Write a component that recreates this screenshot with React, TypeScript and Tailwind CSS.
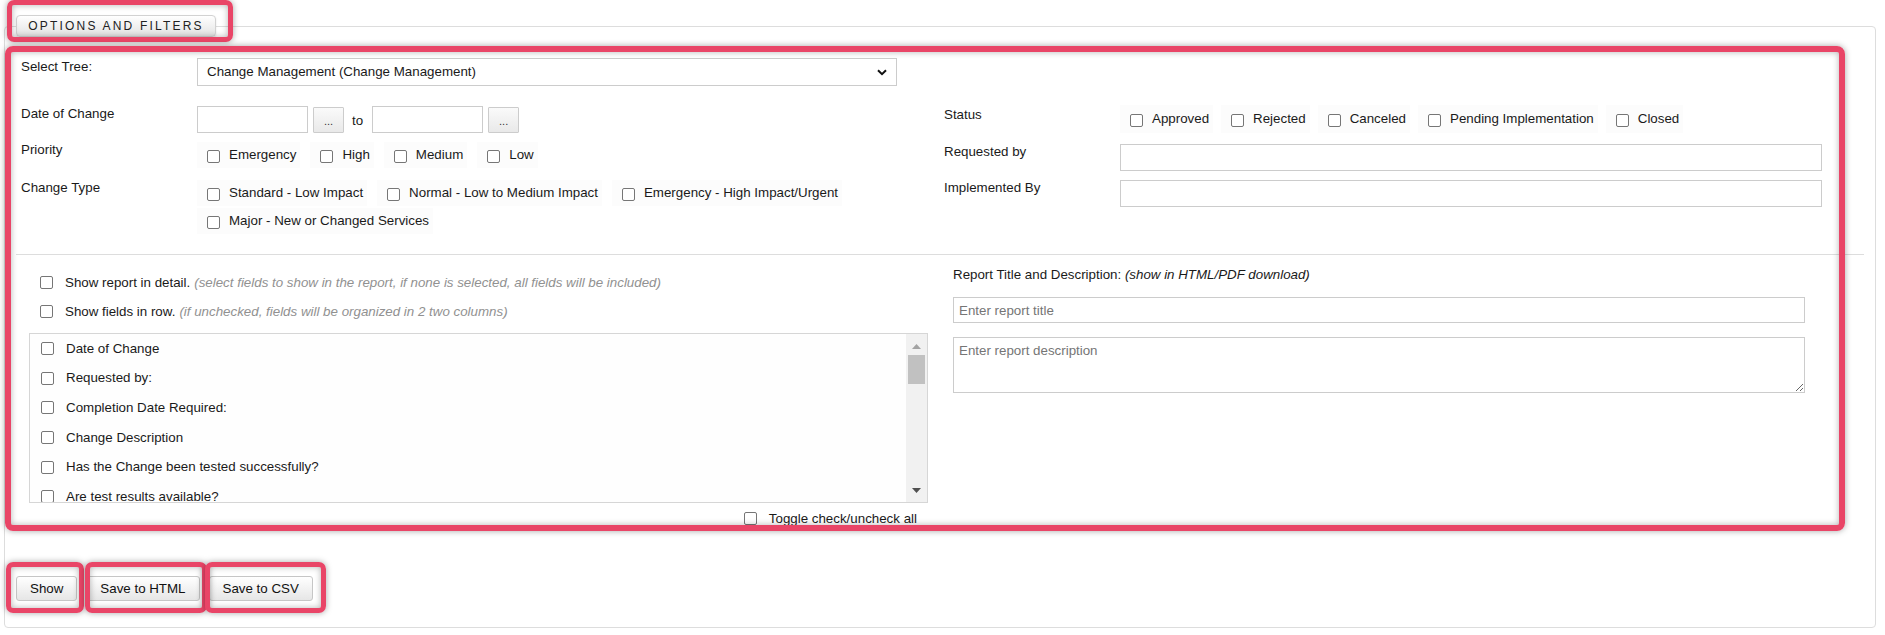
import React from "react";

const Box = ({ className = "" }: { className?: string }) => (
  <span
    className={`inline-block h-[13px] w-[13px] shrink-0 rounded-[2px] border border-[#767676] bg-white ${className}`}
  />
);

function Pill({ label, tall }: { label: string; tall?: boolean }) {
  return (
    <label className={`flex items-center bg-[#fcfcfc] pl-[10px] pr-[4px] ${tall ? "h-[28px]" : "h-[26px]"}`}>
      <Box className="mr-[9px] mt-[3px]" />
      <span className="whitespace-nowrap">{label}</span>
    </label>
  );
}

function Label({ children }: { children: React.ReactNode }) {
  return <div className="w-[176px] shrink-0 leading-[15px]">{children}</div>;
}

function DateInput() {
  return <div className="h-[27px] w-[111px] border border-[#ccc] bg-white" />;
}

function DotsButton() {
  return (
    <div className="ml-[5px] mt-[1px] flex h-[26px] w-[31px] items-end justify-center rounded-[1px] border border-[#ccc] bg-gradient-to-b from-[#fafafa] to-[#e9e9e9] pb-[5px] text-[11px] leading-none text-[#333]">
      ...
    </div>
  );
}

function Redbox({ className }: { className: string }) {
  return (
    <div
      className={`pointer-events-none absolute border-[#e94567] shadow-[0_0_6px_rgba(0,0,0,0.35),inset_0_0_6px_rgba(0,0,0,0.3)] ${className}`}
    />
  );
}

const fields = [
  "Date of Change",
  "Requested by:",
  "Completion Date Required:",
  "Change Description",
  "Has the Change been tested successfully?",
  "Are test results available?",
];

export default function App() {
  return (
    <div className="relative h-[635px] w-[1885px] overflow-hidden bg-white pl-[4px] pt-[26px] font-['Liberation_Sans',Arial,sans-serif] text-[13.33px] text-[#1a1a1a]">
      <div className="relative h-[602px] w-[1872px] rounded-[4px] border border-[#ddd]">
        {/* tab sitting on the top border */}
        <div className="absolute left-[11px] top-[-12px] flex h-[22px] w-[200px] items-center justify-center rounded-[4px] border border-[#d2d2d2] bg-gradient-to-b from-white to-[#e3e3e3] text-[12px] uppercase tracking-[2.2px] text-[#222] shadow-[0_1px_2px_rgba(0,0,0,0.12)]">
          Options and Filters
        </div>

        {/* filters */}
        <div className="pl-[16px] pt-[31px]">
          <div className="flex items-start">
            <Label>
              <div className="pt-[1px]">Select Tree:</div>
            </Label>
            <div className="flex h-[28px] w-[700px] items-center justify-between border border-[#ccc] bg-white pl-[9px] pr-[9px]">
              <span>Change Management (Change Management)</span>
              <svg width="10" height="7" viewBox="0 0 10 7" className="mt-[1px]">
                <path d="M1 1.2 L5 5.2 L9 1.2" fill="none" stroke="#111" strokeWidth="2" />
              </svg>
            </div>
          </div>

          <div className="mt-[20px] flex items-start">
            <div className="w-[923px] shrink-0">
              <div className="flex h-[27px] items-start">
                <Label>Date of Change</Label>
                <DateInput />
                <DotsButton />
                <span className="ml-[8px] mr-[9px] mt-[5px]">to</span>
                <DateInput />
                <DotsButton />
              </div>
              <div className="mt-[9px] flex items-start">
                <Label>Priority</Label>
                <div className="flex gap-[10px]">
                  <Pill label="Emergency" />
                  <Pill label="High" />
                  <Pill label="Medium" />
                  <Pill label="Low" />
                </div>
              </div>
              <div className="mt-[12px] flex items-start">
                <Label>Change Type</Label>
                <div className="flex flex-col gap-[2px]">
                  <div className="flex gap-[10px]">
                    <Pill label="Standard - Low Impact" />
                    <Pill label="Normal - Low to Medium Impact" />
                    <Pill label="Emergency - High Impact/Urgent" />
                  </div>
                  <div className="flex">
                    <Pill label="Major - New or Changed Services" />
                  </div>
                </div>
              </div>
            </div>

            <div className="-mt-[1px] flex-1">
              <div className="flex items-start">
                <Label>
                  <div className="pt-[2px]">Status</div>
                </Label>
                <div className="flex gap-[8px]">
                  <Pill tall label="Approved" />
                  <Pill tall label="Rejected" />
                  <Pill tall label="Canceled" />
                  <Pill tall label="Pending Implementation" />
                  <Pill tall label="Closed" />
                </div>
              </div>
              <div className="mt-[11px] flex items-start">
                <Label>Requested by</Label>
                <div className="h-[27px] w-[702px] border border-[#ccc] bg-white" />
              </div>
              <div className="mt-[9px] flex items-start">
                <Label>Implemented By</Label>
                <div className="h-[27px] w-[702px] border border-[#ccc] bg-white" />
              </div>
            </div>
          </div>
        </div>

        <div className="mx-[11px] mt-[20px] border-t border-[#ddd]" />

        {/* report options */}
        <div className="flex items-start pl-[24px]">
          <div className="w-[899px] shrink-0">
            <div className="mt-[18px] flex h-[19px] items-center pl-[11px]">
              <Box className="mr-[12px]" />
              <span>Show report in detail.</span>
              <span className="ml-[4px] italic text-[#919191]">
                (select fields to show in the report, if none is selected, all fields will be included)
              </span>
            </div>
            <div className="mt-[10px] flex h-[19px] items-center pl-[11px]">
              <Box className="mr-[12px]" />
              <span>Show fields in row.</span>
              <span className="ml-[4px] italic text-[#919191]">
                (if unchecked, fields will be organized in 2 two columns)
              </span>
            </div>
            <div className="mt-[12px] flex h-[170px] border border-[#d6d6d6] bg-[#fefefe]">
              <div className="flex-1 overflow-hidden">
                {fields.map((f) => (
                  <div key={f} className="flex h-[29.6px] shrink-0 items-center pl-[11px]">
                    <Box className="mr-[12px]" />
                    <span>{f}</span>
                  </div>
                ))}
              </div>
              <div className="flex w-[21px] flex-col items-center bg-[#f1f1f1]">
                <svg width="9" height="5" viewBox="0 0 9 5" className="mt-[10px]">
                  <path d="M0 5 L4.5 0 L9 5 Z" fill="#a3a3a3" />
                </svg>
                <div className="mt-[6px] h-[29px] w-[17px] bg-[#c1c1c1]" />
                <div className="flex-1" />
                <svg width="9" height="5" viewBox="0 0 9 5" className="mb-[9px]">
                  <path d="M0 0 L4.5 5 L9 0 Z" fill="#505050" />
                </svg>
              </div>
            </div>
            <div className="mt-[6px] flex h-[19px] items-center justify-end pr-[11px]">
              <Box className="mr-[12px]" />
              <span>Toggle check/uncheck all</span>
            </div>
          </div>

          <div className="ml-[25px] w-[852px]">
            <div className="mt-[12px] leading-[15px]">
              Report Title and Description: <span className="italic">(show in HTML/PDF download)</span>
            </div>
            <input
              className="mt-[15px] block h-[26px] w-[852px] border border-[#ccc] px-[5px] outline-none placeholder:text-[#757575]"
              placeholder="Enter report title"
            />
            <textarea
              className="mt-[14px] block h-[56px] w-[852px] border border-[#ccc] px-[5px] py-[3px] outline-none placeholder:text-[#757575]"
              placeholder="Enter report description"
            />
          </div>
        </div>

        {/* actions */}
        <div className="ml-[11px] mt-[48px] flex gap-[9px]">
          {["Show", "Save to HTML", "Save to CSV"].map((b) => (
            <button
              key={b}
              type="button"
              className="h-[25px] rounded-[3px] border border-[#c6c6c6] bg-gradient-to-b from-white to-[#e6e6e6] px-[13px] text-[13.33px] text-[#111]"
            >
              {b}
            </button>
          ))}
        </div>
      </div>

      {/* highlight marks over the page */}
      <Redbox className="left-[7px] top-0 h-[42px] w-[226px] rounded-[7px] border-[5px]" />
      <Redbox className="left-[5px] top-[46px] h-[485px] w-[1840px] rounded-[8px] border-[6px]" />
      <Redbox className="left-[6px] top-[562px] h-[51px] w-[78px] rounded-[7px] border-[5px]" />
      <Redbox className="left-[85px] top-[562px] h-[51px] w-[122px] rounded-[7px] border-[5px]" />
      <Redbox className="left-[205px] top-[562px] h-[51px] w-[121px] rounded-[7px] border-[5px]" />
    </div>
  );
}
